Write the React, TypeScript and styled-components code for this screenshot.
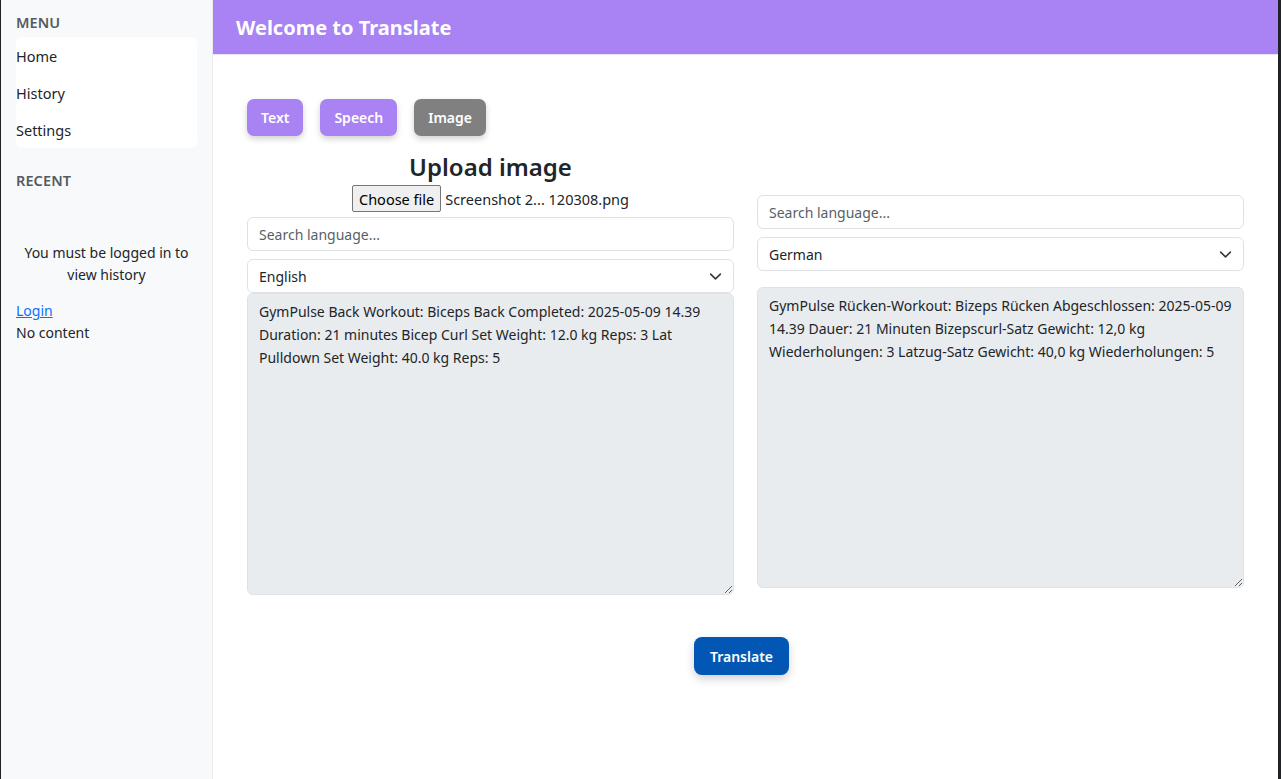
import styled, { createGlobalStyle } from "styled-components";

const GlobalStyle = createGlobalStyle`
    * { box-sizing: border-box; }
    html, body { margin: 0; padding: 0; height: 100%; }
    body {
        background: #1f2328;
        font-family: "Noto Sans", "Open Sans", sans-serif;
        color: #212529;
    }
`;

const Frame = styled.div`
    display: flex;
    height: 100vh;
    margin: 0 3px 0 1px;
    background: #ffffff;
`;

const Sidebar = styled.aside`
    width: 212px;
    flex-shrink: 0;
    background: #f8f9fa;
    border-right: 1px solid #e9ecef;
    padding: 12px 15px 0 15px;
    font-size: 14px;
`;

const SectionTitle = styled.h6`
    margin: 0 0 5px 0;
    font-size: 14.5px;
    font-weight: 600;
    color: #555b62;
    letter-spacing: 0.1px;
`;

const MenuList = styled.ul`
    list-style: none;
    margin: 0 0 22px 0;
    padding: 0;
    background: #ffffff;
    border-radius: 6px;
    font-size: 14.5px;
`;

const MenuItem = styled.li`
    height: 37px;
    display: flex;
    align-items: center;
    color: #212529;
`;

const HistoryNote = styled.p`
    margin: 52px 0 14px 0;
    text-align: center;
    line-height: 22px;
    color: #212529;
`;

const LoginLink = styled.a`
    display: block;
    color: #0d6efd;
    text-decoration: underline;
    line-height: 22px;
`;

const Plain = styled.div`
    line-height: 22px;
`;

const Main = styled.main`
    flex: 1;
    display: flex;
    flex-direction: column;
`;

const Header = styled.header`
    height: 55px;
    background: #a982f3;
    display: flex;
    align-items: center;
    padding: 0 23px;
    border-bottom: 1px solid #ebe4fb;
`;

const Title = styled.h1`
    margin: 0;
    color: #ffffff;
    font-size: 20px;
    font-weight: 700;
`;

const Content = styled.div`
    padding: 44px 34px 0 34px;
    display: flex;
    flex-direction: column;
`;

const ModeBar = styled.div`
    display: flex;
    gap: 17px;
`;

const ModeButton = styled.button<{ $active?: boolean }>`
    height: 37px;
    padding: 0 14px;
    border: none;
    border-radius: 7px;
    background: ${(p) => (p.$active ? "#808080" : "#a982f3")};
    color: #ffffff;
    font-family: inherit;
    font-size: 14px;
    font-weight: 600;
    box-shadow: 0 3px 6px rgba(0, 0, 0, 0.18);
`;

const Columns = styled.div`
    display: grid;
    grid-template-columns: 1fr 1fr;
    column-gap: 23px;
    margin-top: 14px;
`;

const Column = styled.div<{ $offset?: number }>`
    display: flex;
    flex-direction: column;
    padding-top: ${(p) => p.$offset ?? 0}px;
`;

const UploadTitle = styled.h2`
    margin: 0;
    text-align: center;
    font-size: 24px;
    font-weight: 600;
    line-height: 34px;
`;

const FileRow = styled.div`
    display: flex;
    justify-content: center;
    align-items: center;
    gap: 4px;
    margin: 1px 0 5px 0;
    font-size: 14.5px;
`;

const FileButton = styled.span`
    display: inline-flex;
    align-items: center;
    height: 27px;
    padding: 0 6px;
    background: #efefef;
    border: 1px solid #767676;
    border-radius: 2px;
    color: #000000;
`;

const SearchInput = styled.input`
    height: 34px;
    width: 100%;
    padding: 0 11px;
    border: 1px solid #dee2e6;
    border-radius: 6px;
    font-family: inherit;
    font-size: 14px;
    color: #212529;
    &::placeholder { color: #595f66; }
`;

const SelectBox = styled.div<{ $gapBelow: number }>`
    height: 34px;
    margin: 8px 0 ${(p) => p.$gapBelow}px 0;
    padding: 0 11px;
    border: 1px solid #dee2e6;
    border-radius: 6px;
    display: flex;
    align-items: center;
    justify-content: space-between;
    font-size: 14px;
`;

const TextBox = styled.textarea<{ $h: number }>`
    width: 100%;
    height: ${(p) => p.$h}px;
    padding: 6px 11px;
    border: 1px solid #dee2e6;
    border-radius: 6px;
    background: #e9ecef;
    font-family: inherit;
    font-size: 14px;
    line-height: 23px;
    color: #212529;
    resize: vertical;
    outline: none;
`;

const Footer = styled.div`
    display: flex;
    justify-content: center;
    margin-top: 42px;
`;

const TranslateButton = styled.button`
    height: 38px;
    padding: 0 16px;
    border: none;
    border-radius: 8px;
    background: #0257b4;
    color: #ffffff;
    font-family: inherit;
    font-size: 14px;
    font-weight: 600;
    box-shadow: 0 4px 10px rgba(0, 0, 0, 0.18);
    margin-right: 8px;
`;

function Chevron() {
    return (
        <svg width="13" height="13" viewBox="0 0 16 16" fill="none">
            <path d="M2 5l6 6 6-6" stroke="#343a40" strokeWidth="2" strokeLinecap="round" strokeLinejoin="round" />
        </svg>
    );
}

const sourceText =
    "GymPulse Back Workout: Biceps Back Completed: 2025-05-09 14.39 Duration: 21 minutes Bicep Curl Set Weight: 12.0 kg Reps: 3 Lat Pulldown Set Weight: 40.0 kg Reps: 5";
const targetText =
    "GymPulse Rücken-Workout: Bizeps Rücken Abgeschlossen: 2025-05-09 14.39 Dauer: 21 Minuten Bizepscurl-Satz Gewicht: 12,0 kg Wiederholungen: 3 Latzug-Satz Gewicht: 40,0 kg Wiederholungen: 5";

export default function App() {
    return (
        <>
            <GlobalStyle />
            <Frame>
                <Sidebar>
                    <SectionTitle>MENU</SectionTitle>
                    <MenuList>
                        <MenuItem>Home</MenuItem>
                        <MenuItem>History</MenuItem>
                        <MenuItem>Settings</MenuItem>
                    </MenuList>
                    <SectionTitle>RECENT</SectionTitle>
                    <HistoryNote>You must be logged in to view history</HistoryNote>
                    <LoginLink href="#">Login</LoginLink>
                    <Plain>No content</Plain>
                </Sidebar>
                <Main>
                    <Header>
                        <Title>Welcome to Translate</Title>
                    </Header>
                    <Content>
                        <ModeBar>
                            <ModeButton>Text</ModeButton>
                            <ModeButton>Speech</ModeButton>
                            <ModeButton $active>Image</ModeButton>
                        </ModeBar>
                        <Columns>
                            <Column>
                                <UploadTitle>Upload image</UploadTitle>
                                <FileRow>
                                    <FileButton>Choose file</FileButton>
                                    <span>Screenshot 2... 120308.png</span>
                                </FileRow>
                                <SearchInput placeholder="Search language..." />
                                <SelectBox $gapBelow={0}>
                                    <span>English</span>
                                    <Chevron />
                                </SelectBox>
                                <TextBox $h={302} readOnly value={sourceText} />
                            </Column>
                            <Column $offset={45}>
                                <SearchInput placeholder="Search language..." />
                                <SelectBox $gapBelow={16}>
                                    <span>German</span>
                                    <Chevron />
                                </SelectBox>
                                <TextBox $h={301} readOnly value={targetText} />
                            </Column>
                        </Columns>
                        <Footer>
                            <TranslateButton>Translate</TranslateButton>
                        </Footer>
                    </Content>
                </Main>
            </Frame>
        </>
    );
}
